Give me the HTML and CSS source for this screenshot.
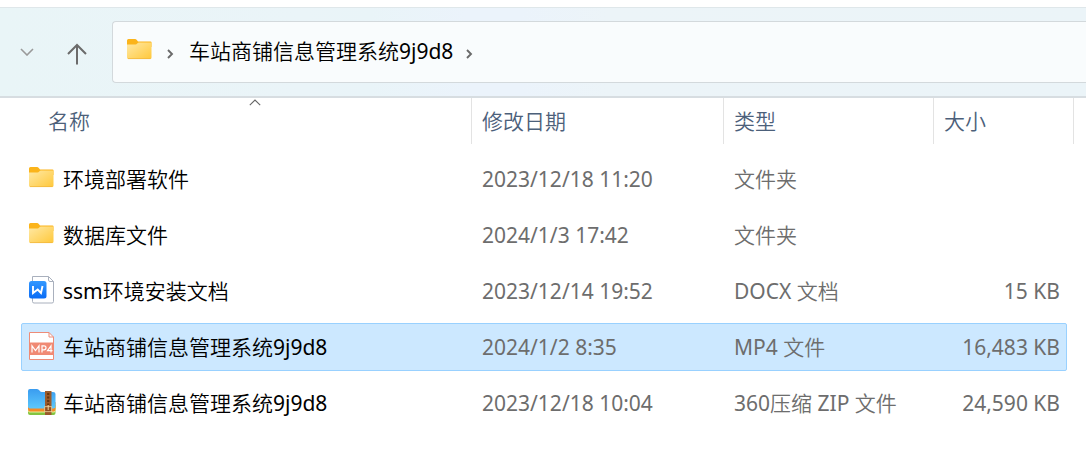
FILE: index.html
```html
<!DOCTYPE html>
<html lang="zh-CN">
<head>
<meta charset="utf-8">
<title>车站商铺信息管理系统9j9d8</title>
<link rel="stylesheet" href="styles.css">
</head>
<body>
<svg class="defs" width="0" height="0" aria-hidden="true">
  <defs>
    <linearGradient id="folder-fill" x1="0" y1="0" x2="1" y2="1">
      <stop offset="0" stop-color="#ffe9a6"/>
      <stop offset="1" stop-color="#ffc83a"/>
    </linearGradient>
    <linearGradient id="word-fill" x1="0" y1="0" x2="0" y2="1">
      <stop offset="0" stop-color="#3398ff"/>
      <stop offset="1" stop-color="#0a6cf5"/>
    </linearGradient>
    <linearGradient id="zip-fill" x1="0" y1="0" x2="0" y2="1">
      <stop offset="0" stop-color="#3a9cf0"/>
      <stop offset="1" stop-color="#5cc8fb"/>
    </linearGradient>
    <symbol id="folder" viewBox="0 0 28 28">
      <path d="M1 4.500Q1 3 2.500 3H9Q10 3 11 4.200L12 5.500H24.500Q25.500 5.500 25.500 6.500V11H1Z" fill="#fbb41b"/>
      <path d="M1 8.500H9.500Q10.500 8.500 11.200 7.600Q12 6.500 13 6.500H25.500V21.500Q25.500 23 24 23H2.500Q1 23 1 21.500Z" fill="url(#folder-fill)"/>
      <path d="M2 22.600H24.500" stroke="#f3b63c" stroke-width=".8"/>
    </symbol>
  </defs>
</svg>

<header class="toolbar">
  <button class="nav-button recent" type="button" aria-label="最近浏览的位置">
    <svg width="14" height="8" viewBox="0 0 14 8"><path d="M1 1l6 6 6-6" fill="none" stroke="#9a9a9a" stroke-width="1.600"/></svg>
  </button>
  <button class="nav-button up" type="button" aria-label="向上">
    <svg width="20" height="22" viewBox="0 0 20 22"><path d="M10 21.500V2M1 11l9-9 9 9" fill="none" stroke="#6b6b6b" stroke-width="2"/></svg>
  </button>
  <nav class="address" aria-label="地址">
    <svg class="icon" width="28" height="28"><use href="#folder"/></svg>
    <svg class="chevron" width="7" height="10" viewBox="0 0 7 10"><path d="M1 1l4 4-4 4" fill="none" stroke="#6a6a6a" stroke-width="1.900"/></svg>
    <a class="crumb" href="#">车站商铺信息管理系统<span class="latin">9j9d8</span></a>
    <svg class="chevron" width="7" height="10" viewBox="0 0 7 10"><path d="M1 1l4 4-4 4" fill="none" stroke="#6a6a6a" stroke-width="1.900"/></svg>
  </nav>
</header>

<main>
  <table class="files">
    <thead>
      <tr class="row head">
        <th class="name" scope="col" aria-sort="ascending">名称
          <svg class="sort" width="12" height="7" viewBox="0 0 12 7"><path d="M.8 6.200L6 1l5.200 5.200" fill="none" stroke="#666" stroke-width="1.100"/></svg>
        </th>
        <th scope="col">修改日期</th>
        <th scope="col">类型</th>
        <th scope="col">大小</th>
      </tr>
    </thead>
    <tbody>
      <tr class="row">
        <td class="name"><svg class="icon" width="28" height="28"><use href="#folder"/></svg><span>环境部署软件</span></td>
        <td class="latin">2023/12/18 11:20</td>
        <td>文件夹</td>
        <td class="size latin"></td>
      </tr>
      <tr class="row">
        <td class="name"><svg class="icon" width="28" height="28"><use href="#folder"/></svg><span>数据库文件</span></td>
        <td class="latin">2024/1/3 17:42</td>
        <td>文件夹</td>
        <td class="size latin"></td>
      </tr>
      <tr class="row">
        <td class="name">
          <svg class="icon" width="28" height="28" viewBox="0 0 28 28">
            <path d="M4.500.5H20.500L25.500 5.500V25.500Q25.500 27 24 27H6Q4.500 27 4.500 25.500Z" fill="#fff" stroke="#a9b0bd"/>
            <path d="M20.500 .5V4Q20.500 5.500 22 5.500H25.500" fill="none" stroke="#a9b0bd"/>
            <rect x="1" y="5" width="17.500" height="17.500" rx="2.500" fill="url(#word-fill)"/>
            <path d="M5 10V17L9.700 13.500L13 17L14.500 10" fill="none" stroke="#fff" stroke-width="1.900"/>
          </svg><span><span class="latin">ssm</span>环境安装文档</span></td>
        <td class="latin">2023/12/14 19:52</td>
        <td><span class="latin">DOCX</span> 文档</td>
        <td class="size latin">15 KB</td>
      </tr>
      <tr class="row selected" aria-selected="true">
        <td class="name">
          <svg class="icon" width="28" height="28" viewBox="0 0 28 28">
            <path d="M1.500.5H21L25.500 5V27.500H1.500Z" fill="#fff" stroke="#ee8c78"/>
            <path d="M21 .5V5H25.500" fill="none" stroke="#ee8c78"/>
            <path d="M1 10.500H26V23H1Z" fill="#f08a74"/>
            <path d="M4 20.500V13.800L7.500 18.500L11 13.800V20.500M14 20.500V13.800H16Q18 13.800 18 15.800T16 17.800H14M23 20.500V13.800L19.500 18.700H24.500" fill="none" stroke="#fff" stroke-width="1.200"/>
          </svg><span>车站商铺信息管理系统<span class="latin">9j9d8</span></span></td>
        <td class="latin">2024/1/2 8:35</td>
        <td><span class="latin">MP4</span> 文件</td>
        <td class="size latin">16,483 KB</td>
      </tr>
      <tr class="row">
        <td class="name">
          <svg class="icon" width="28" height="28" viewBox="0 0 28 28">
            <path d="M0 17H27.500V25Q27.500 27 25.500 27H2Q0 27 0 25Z" fill="#83c440"/>
            <path d="M0 15H27.500V22.500Q27.500 24.500 26 24.500H1.500Q0 24.500 0 22.500Z" fill="#e9ef9a"/>
            <path d="M0 14H27.500V21Q27.500 23.500 25.500 23.500H2Q0 23.500 0 21Z" fill="#f58a25"/>
            <path d="M0 3Q0 1 2 1H9Q10.500 1 11.500 2.500T14 4H25Q27.500 4 27.500 6V18.500Q27.500 20.500 25.500 20.500H2Q0 20.500 0 18.500Z" fill="url(#zip-fill)"/>
            <path d="M17 3H23.500V27H17Z" fill="#9a5a2a"/>
            <path d="M20.200 5V17" stroke="#653510" stroke-width="2.200" stroke-dasharray="2 1.500"/>
            <rect x="16.700" y="18.700" width="7" height="5" fill="#8f5122" stroke="#f0d3a0" stroke-width=".8"/>
            <path d="M20.200 17V22" stroke="#f0d3a0" stroke-width="1"/>
          </svg><span>车站商铺信息管理系统<span class="latin">9j9d8</span></span></td>
        <td class="latin">2023/12/18 10:04</td>
        <td><span class="latin">360</span>压缩 <span class="latin">ZIP</span> 文件</td>
        <td class="size latin">24,590 KB</td>
      </tr>
    </tbody>
  </table>
</main>
</body>
</html>
```
FILE: styles.css
```css
* {
  box-sizing: border-box;
}

body {
  margin: 0;
  background: #fff;
  color: #000;
  font: 350 21px/30px "Noto Sans", "Noto Sans CJK SC", sans-serif;
  overflow-x: hidden;
}

.latin {
  font-weight: 400;
}

.defs {
  position: absolute;
}

.toolbar {
  display: flex;
  align-items: stretch;
  margin-top: 7px;
  padding: 13px 0 13px 12px;
  border-top: 1px solid #dfe7ea;
  border-bottom: 2px solid #d7dde1;
  background: linear-gradient(90deg, #e9f5f7 0%, #eaf4f8 28%, #e9f4f8 34%, #ebf3fb 43%, #ebf3fb 48%, #ecf4f8 56%, #ebf4f8 100%);
}

.nav-button {
  display: flex;
  align-items: center;
  justify-content: center;
  width: 30px;
  padding: 0;
  border: 0;
  background: none;
}

.nav-button.up {
  width: 40px;
  margin: 4px 15px 0;
}

.address {
  display: flex;
  flex: 1;
  align-items: center;
  padding: 14px 13px 16px;
  border: 1px solid #d3d9dc;
  border-right: 0;
  border-radius: 4px 0 0 4px;
  background: #f9fcfd;
}

.address .icon {
  margin-bottom: 2px;
}

.chevron {
  margin: 5px 15px 0 13px;
}

.crumb {
  color: #000;
  text-decoration: none;
}

.icon {
  display: block;
  flex: none;
}

.files,
.files thead,
.files tbody {
  display: block;
}

.row {
  display: grid;
  grid-template-columns: 450px 252px 210px 1fr;
  height: 48px;
  margin: 0 19px 8px 21px;
  border: 1px solid transparent;
  border-radius: 2px;
}

.row.head {
  height: 46px;
  margin: 0 12px 11px 21px;
  border-width: 0 0 0 1px;
}

.row.selected {
  border-color: #99d1ff;
  background: #cce8ff;
}

th {
  padding: 8px 10px;
  border-right: 1px solid #e3e3e3;
  color: #4c607a;
  font-weight: 350;
  text-align: left;
}

th.name {
  position: relative;
  margin-left: 16px;
}

.sort {
  position: absolute;
  top: 1px;
  left: 50%;
  margin-left: -6px;
}

td {
  padding: 8px 10px;
  color: #6d6d6d;
  white-space: nowrap;
}

td.name {
  display: flex;
  align-items: center;
  gap: 7px;
  padding: 8px 6px;
  color: #000;
}

td.name .icon {
  margin-bottom: 2px;
}

td.size {
  padding-right: 6px;
  text-align: right;
}
```
